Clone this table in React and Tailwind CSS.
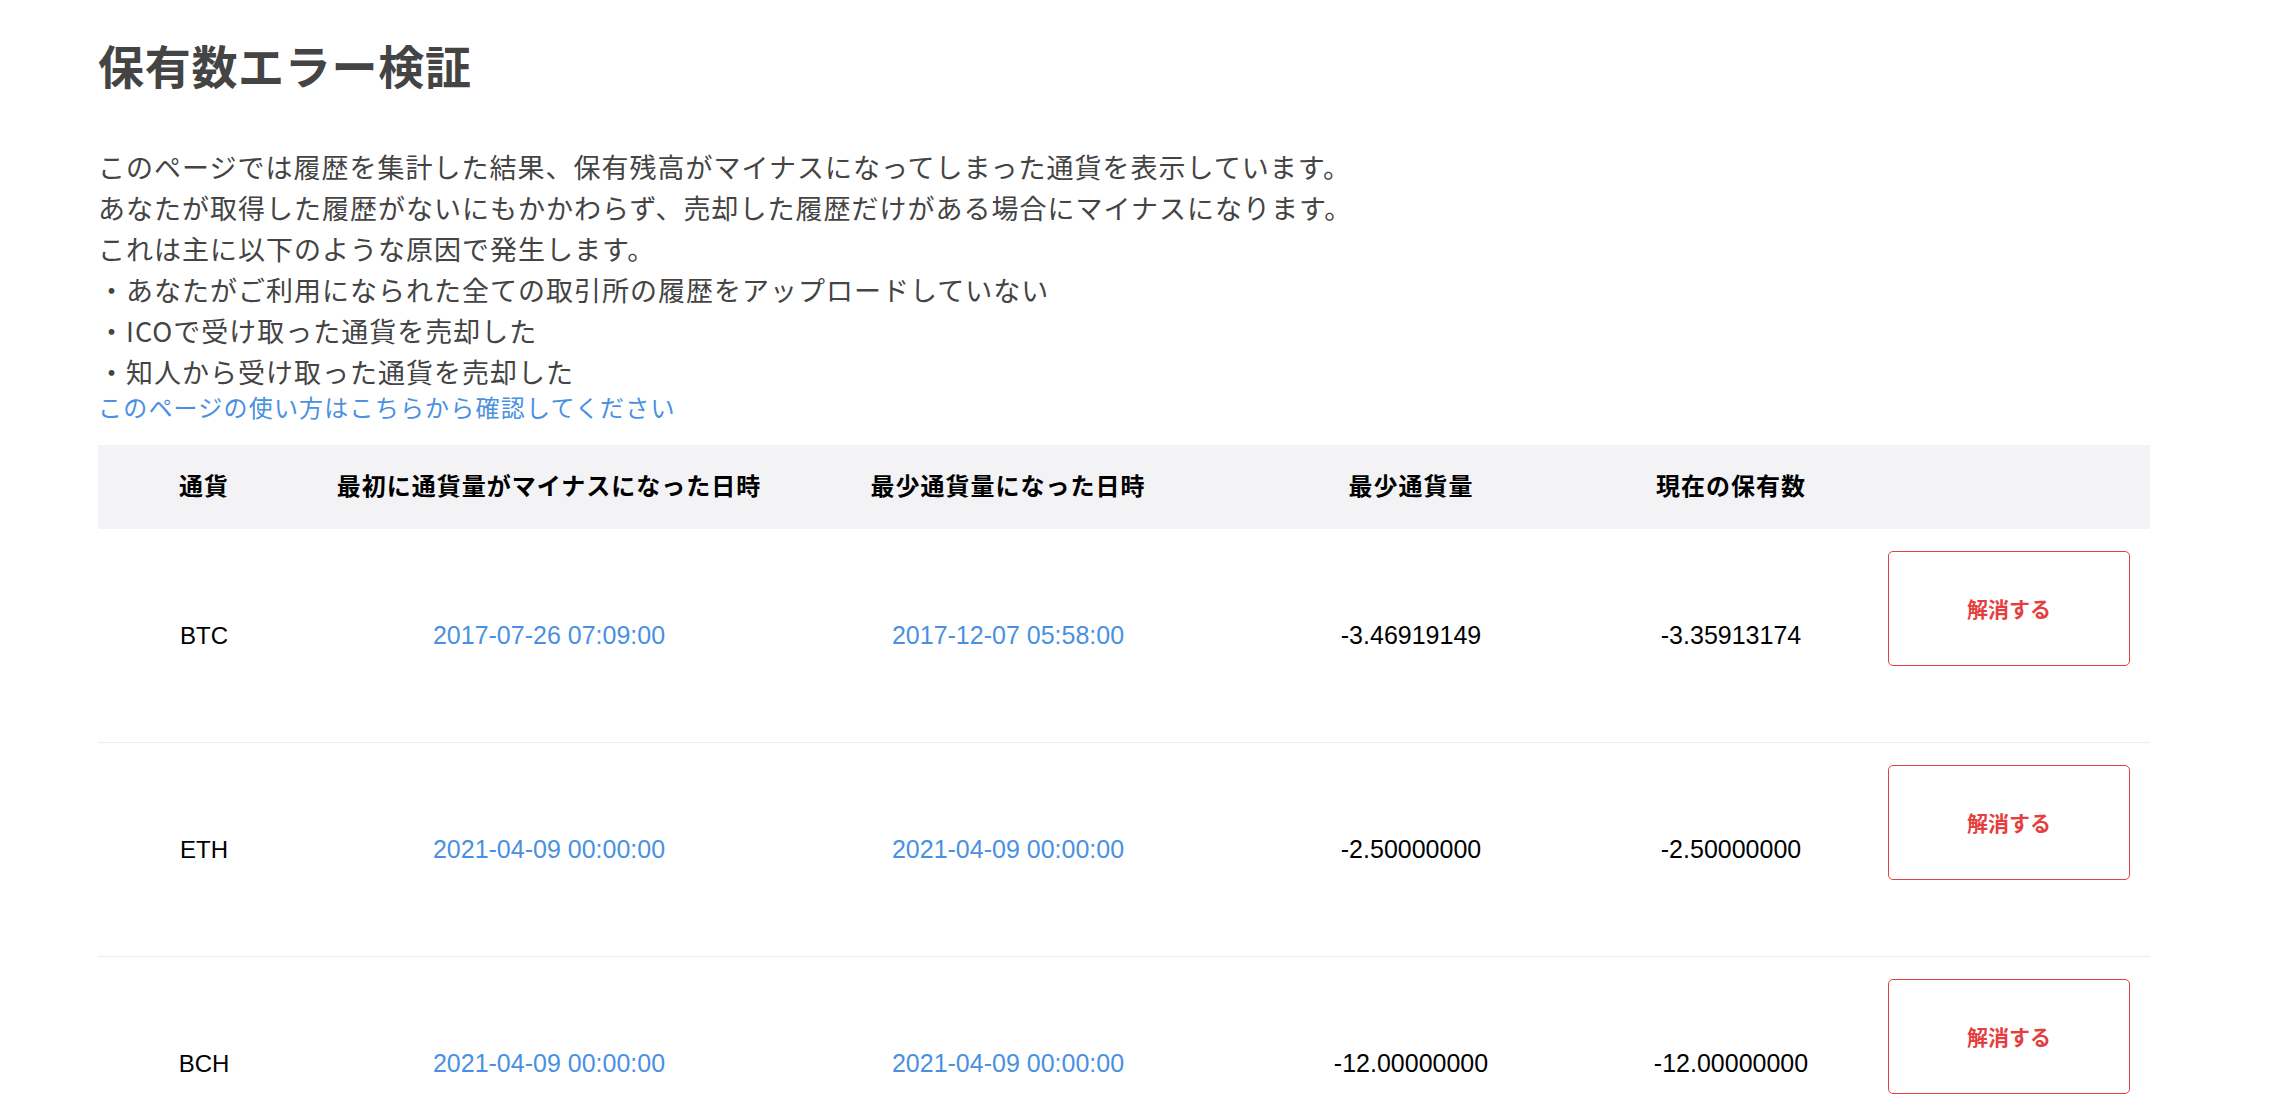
import React from 'react';

const rows = [
  { coin: 'BTC', firstMinus: '2017-07-26 07:09:00', minAt: '2017-12-07 05:58:00', minAmount: '-3.46919149', holding: '-3.35913174' },
  { coin: 'ETH', firstMinus: '2021-04-09 00:00:00', minAt: '2021-04-09 00:00:00', minAmount: '-2.50000000', holding: '-2.50000000' },
  { coin: 'BCH', firstMinus: '2021-04-09 00:00:00', minAt: '2021-04-09 00:00:00', minAmount: '-12.00000000', holding: '-12.00000000' },
];

const cols = 'grid grid-cols-[212px_478px_440px_366px_274px_282px]';

const App = () => {
  return (
    <div className="min-h-screen bg-white pl-[98px] font-['Noto_Sans_CJK_JP',sans-serif]">
      <h1 className="pt-[30px] text-[46px] leading-[69px] font-bold tracking-[0.7px] text-[#444]">保有数エラー検証</h1>

      <div className="mt-[47px] text-[27px] leading-[41px] tracking-[1px] text-[#444]">
        <p>このページでは履歴を集計した結果、保有残高がマイナスになってしまった通貨を表示しています。</p>
        <p>あなたが取得した履歴がないにもかかわらず、売却した履歴だけがある場合にマイナスになります。</p>
        <p>これは主に以下のような原因で発生します。</p>
        <p>・あなたがご利用になられた全ての取引所の履歴をアップロードしていない</p>
        <p>・ICOで受け取った通貨を売却した</p>
        <p>・知人から受け取った通貨を売却した</p>
      </div>
      <a href="#" className="-mt-[3px] block text-[24px] leading-[36px] tracking-[1.2px] text-[#4a90e2]">
        このページの使い方はこちらから確認してください
      </a>

      <div className="mt-[20px] w-[2052px] font-['Liberation_Sans','Noto_Sans_CJK_JP',sans-serif]">
        <div className={`${cols} h-[84px] items-center bg-[#f3f3f6] text-[24px] font-bold tracking-[1px] text-black`}>
          <div className="text-center">通貨</div>
          <div className="text-center">最初に通貨量がマイナスになった日時</div>
          <div className="text-center">最少通貨量になった日時</div>
          <div className="text-center">最少通貨量</div>
          <div className="text-center">現在の保有数</div>
          <div />
        </div>

        {rows.map((r) => (
          <div key={r.coin} className={`${cols} h-[214px] items-center border-b border-[#ececf2] text-[25px] text-black`}>
            <div className="text-center text-[24px]">{r.coin}</div>
            <div className="text-center text-[#4a90e2]">{r.firstMinus}</div>
            <div className="text-center text-[#4a90e2]">{r.minAt}</div>
            <div className="text-center">{r.minAmount}</div>
            <div className="text-center">{r.holding}</div>
            <div className="flex h-full items-start justify-center pt-[22px]">
              <button className="h-[115px] w-[242px] rounded-[5px] border border-[#e53e3e] bg-white text-[21px] font-bold text-[#e53e3e] font-['Noto_Sans_CJK_JP',sans-serif]">
                解消する
              </button>
            </div>
          </div>
        ))}
      </div>
    </div>
  );
};

export default App;
